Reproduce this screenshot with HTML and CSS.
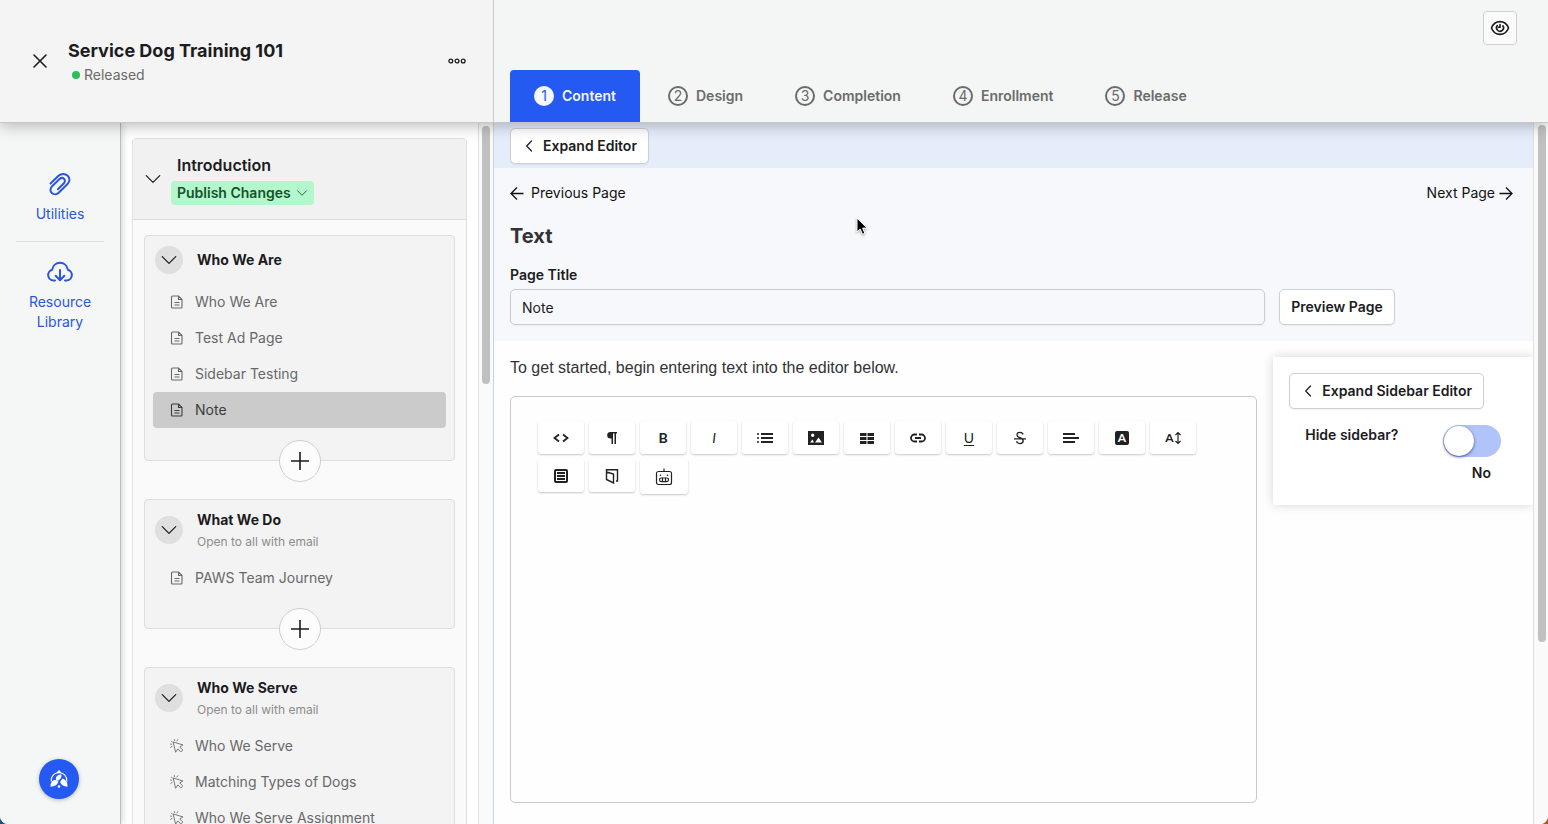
FILE: index.html
```html
<!DOCTYPE html>
<html lang="en">
<head>
<meta charset="utf-8">
<meta name="viewport" content="width=device-width, initial-scale=1">
<title>Service Dog Training 101</title>
<link rel="stylesheet" href="styles.css">
</head>
<body>
<svg class="sprite" aria-hidden="true">
  <symbol id="i-down" viewBox="0 0 16 16"><path d="M2 5l6 6 6-6" fill="none" stroke="currentColor" stroke-width="1.100" stroke-linecap="round" stroke-linejoin="round"/></symbol>
  <symbol id="i-left" viewBox="0 0 12 12"><path d="M9 1L4.200 6 9 11" fill="none" stroke="currentColor" stroke-width="1.200" stroke-linecap="round" stroke-linejoin="round"/></symbol>
  <symbol id="i-doc" viewBox="0 0 14 16"><path d="M2.500 2h6l3.500 3.500v7.500a1 1 0 0 1-1 1h-8.500a1 1 0 0 1-1-1v-10a1 1 0 0 1 1-1zM8.500 2v3.500h3.500M4.500 8.500h5M4.500 11h5" fill="none" stroke="currentColor" stroke-width="1.100"/></symbol>
  <symbol id="i-click" viewBox="0 0 16 16"><path d="M4 3.500l10.800 3.300-3.600 2.300 3.400 3.500-2.200 2.200-3.400-3.500-2.300 3.500zM2.600 3.400l-.9-.9M5.300 1.800L5 .6M8 2.200l.9-1.300M1.900 6L.6 5.800M2.300 8.600l-1.400.9" fill="none" stroke="currentColor" stroke-width="1" stroke-linejoin="round" stroke-linecap="round"/></symbol>
  <symbol id="i-plus" viewBox="0 0 18 18"><path d="M9 0v18M0 9h18" stroke="currentColor" stroke-width="1.600"/></symbol>
</svg>
<div class="app">
  <header class="top">
    <div class="course">
      <button class="bare close" aria-label="Close"><svg width="14" height="14" viewBox="0 0 14 14"><path d="M1 1l12 12M13 1L1 13" stroke="currentColor" stroke-width="1.600" stroke-linecap="round"/></svg></button>
      <div class="course-name">
        <h1>Service Dog Training 101</h1>
        <p class="status"><span class="dot"></span>Released</p>
      </div>
      <button class="bare more" aria-label="More"><svg width="20" height="8" viewBox="0 0 20 8"><g fill="none" stroke="currentColor" stroke-width="1.300"><circle cx="3.800" cy="4" r="1.900"/><circle cx="10" cy="4" r="1.900"/><circle cx="16.200" cy="4" r="1.900"/></g></svg></button>
    </div>
    <div class="top-main">
      <button class="eye" aria-label="Preview"><svg width="20" height="20" viewBox="0 0 20 20"><g fill="none" stroke="currentColor" stroke-width="1.600" stroke-linecap="round"><path d="M1.500 10C3 6 6 3.600 10 3.600S17 6 18.500 10C17 14 14 16.400 10 16.400S3 14 1.500 10z"/><path d="M12.900 7.800a3.500 3.500 0 1 1-5.600-.2M10 6.600v2.600h-1.600"/></g></svg></button>
      <nav class="tabs">
        <a href="#content" class="tab active"><span class="num">1</span>Content</a>
        <a href="#design" class="tab"><span class="num">2</span>Design</a>
        <a href="#completion" class="tab"><span class="num">3</span>Completion</a>
        <a href="#enrollment" class="tab"><span class="num">4</span>Enrollment</a>
        <a href="#release" class="tab"><span class="num">5</span>Release</a>
      </nav>
    </div>
  </header>
  <div class="body">
    <aside class="rail">
      <a href="#utilities" class="rail-link"><svg width="24" height="24" viewBox="0 0 24 24"><path d="M2.500 11.500L10.500 3.800C13.300 1.200 17.300 1.500 19.700 3.700S22 9.500 19.500 12l-8.800 8.800c-2 2-5 2-6.900.3s-1.700-4.900.3-6.800l7.400-7.300c1.300-1.200 3.300-1.300 4.500-.2s1.200 3.100-.1 4.400l-6 6" fill="none" stroke="currentColor" stroke-width="2" stroke-linecap="round"/></svg>Utilities</a>
      <a href="#library" class="rail-link"><svg width="28" height="24" viewBox="0 0 28 24"><path d="M9 20.500H7.500a5.500 5.500 0 0 1-1.300-10.800C6.800 5.500 10 2.800 14 2.800s7.200 2.700 7.800 6.900a5.500 5.500 0 0 1-1.300 10.800H19M14 10v10M9.700 15.800L14 20.200l4.300-4.400" fill="none" stroke="currentColor" stroke-width="2" stroke-linecap="round" stroke-linejoin="round"/></svg>Resource Library</a>
      <button class="fab" aria-label="Help"><svg width="20" height="20" viewBox="0 0 20 20"><path d="M2.200 12.500C2 6.500 5.500 3.700 10 3.700s8 2.800 7.800 8.800" fill="none" stroke="#fff" stroke-width="1.100"/><path d="M7.500 3.900L10 .8l2.500 3.100z" fill="#fff"/><path d="M12.500 5.500C9.500 5.500 7 7 6.800 9.300c0 1.100.2 2 .7 2.700 3.500-.8 5.300-3 5-6.500z" fill="#fff"/><path d="M1.500 17.800c-.3-3.300 1.200-6 4-7 1.200 1 3 .8 3.800 1.800-.5 3-3.300 5-7.800 5.200zM18.500 17.800c.3-3.800-1.500-7.300-5-8.300-.8 1.500-2 2.200-2.300 3.600.8 2.800 3.300 4.600 7.300 4.700z" fill="#fff"/><circle cx="10" cy="17.500" r="1.300" fill="#fff"/></svg></button>
    </aside>
    <aside class="outline">
      <section class="module">
        <div class="module-head">
          <button class="bare" aria-label="Collapse Introduction"><svg width="18" height="18"><use href="#i-down"/></svg></button>
          <div class="module-title">
            <h2>Introduction</h2>
            <button class="publish">Publish Changes<svg width="12" height="12"><use href="#i-down"/></svg></button>
          </div>
        </div>
        <div class="lessons">
          <section class="lesson">
            <div class="lesson-head one-line">
              <button class="round" aria-label="Collapse"><svg width="18" height="18"><use href="#i-down"/></svg></button>
              <div><h3>Who We Are</h3></div>
            </div>
            <a href="#p1" class="item"><svg width="14" height="16"><use href="#i-doc"/></svg>Who We Are</a>
            <a href="#p2" class="item"><svg width="14" height="16"><use href="#i-doc"/></svg>Test Ad Page</a>
            <a href="#p3" class="item"><svg width="14" height="16"><use href="#i-doc"/></svg>Sidebar Testing</a>
            <a href="#p4" class="item current"><svg width="14" height="16"><use href="#i-doc"/></svg>Note</a>
            <button class="add" aria-label="Add page"><svg width="18" height="18"><use href="#i-plus"/></svg></button>
          </section>
          <section class="lesson">
            <div class="lesson-head two-line">
              <button class="round" aria-label="Collapse"><svg width="18" height="18"><use href="#i-down"/></svg></button>
              <div><h3>What We Do</h3><p>Open to all with email</p></div>
            </div>
            <a href="#p5" class="item"><svg width="14" height="16"><use href="#i-doc"/></svg>PAWS Team Journey</a>
            <button class="add" aria-label="Add page"><svg width="18" height="18"><use href="#i-plus"/></svg></button>
          </section>
          <section class="lesson">
            <div class="lesson-head two-line">
              <button class="round" aria-label="Collapse"><svg width="18" height="18"><use href="#i-down"/></svg></button>
              <div><h3>Who We Serve</h3><p>Open to all with email</p></div>
            </div>
            <a href="#p6" class="item"><svg width="14" height="16"><use href="#i-click"/></svg>Who We Serve</a>
            <a href="#p7" class="item"><svg width="14" height="16"><use href="#i-click"/></svg>Matching Types of Dogs</a>
            <a href="#p8" class="item"><svg width="14" height="16"><use href="#i-click"/></svg>Who We Serve Assignment</a>
          </section>
        </div>
      </section>
    </aside>
    <div class="track outline-track"><div class="thumb"></div></div>
    <main class="main">
      <div class="bar"><button class="btn"><svg width="13" height="12"><use href="#i-left"/></svg>Expand Editor</button></div>
      <div class="page-head">
        <div class="pager">
          <a href="#prev"><svg width="14" height="14" viewBox="0 0 14 14"><path d="M13.500 7.500h-12M7 1.500l-6 6 6 6" fill="none" stroke="currentColor" stroke-width="1.300"/></svg>Previous Page</a>
          <a href="#next" class="next">Next Page<svg width="14" height="14" viewBox="0 0 14 14"><path d="M.5 7.500h12M7 1.500l6 6-6 6" fill="none" stroke="currentColor" stroke-width="1.300"/></svg></a>
        </div>
        <h2>Text</h2>
        <label for="page-title">Page Title</label>
        <div class="title-row">
          <input id="page-title" type="text" value="Note">
          <button class="btn">Preview Page</button>
        </div>
      </div>
      <div class="work">
        <div class="editor-col">
          <p class="intro">To get started, begin entering text into the editor below.</p>
          <div class="editor">
            <div class="tools">
              <button aria-label="HTML"><svg width="16" height="16" viewBox="0 0 16 16"><path d="M6 4.500L1.500 8 6 11.500M10 4.500L14.500 8 10 11.500" fill="none" stroke="currentColor" stroke-width="1.800"/></svg></button>
              <button aria-label="Format"><svg width="16" height="16" viewBox="0 0 16 16"><path d="M13 2H6.500a3.300 3.300 0 0 0 0 6.600H7.500V14H9V3.500h1.500V14H12V3.500h1z" fill="currentColor"/></svg></button>
              <button class="letter bold">B</button>
              <button class="letter italic">I</button>
              <button aria-label="Lists"><svg width="16" height="16" viewBox="0 0 16 16"><path d="M4 4h12M4 8h12M4 12h12" stroke="currentColor" stroke-width="2"/><path d="M0 4h2M0 8h2M0 12h2" stroke="currentColor" stroke-width="1.600"/></svg></button>
              <button aria-label="Image"><svg width="16" height="16" viewBox="0 0 16 16"><path fill-rule="evenodd" d="M0 1h16v14H0zM2 12.500h4L4.500 9.500zM7 12.500h7L10.500 7.500zM4.700 3.500a1.700 1.700 0 1 0 0 3.400 1.700 1.700 0 0 0 0-3.400z" fill="currentColor"/></svg></button>
              <button aria-label="Table"><svg width="16" height="16" viewBox="0 0 16 16"><path d="M1 3h6.500v3H1zM8.500 3H15v3H8.500zM1 7h6.500v3H1zM8.500 7H15v3H8.500zM1 11h6.500v3H1zM8.500 11H15v3H8.500z" fill="currentColor"/></svg></button>
              <button aria-label="Link"><svg width="16" height="16" viewBox="0 0 16 16"><path d="M7 4.500H4.500a3.500 3.500 0 0 0 0 7H7M9 4.500h2.500a3.500 3.500 0 0 1 0 7H9M5 8h6" fill="none" stroke="currentColor" stroke-width="1.800"/></svg></button>
              <button class="letter under">U</button>
              <button class="letter strike" aria-label="Strikethrough"><svg width="12" height="14" viewBox="0 0 12 14"><path d="M9.200 3.400C8.500 2 7.400 1.400 6 1.400 4.200 1.400 3 2.400 3 3.900 3 7.300 9.200 6 9.200 9.800c0 1.700-1.300 2.800-3.200 2.800-1.700 0-2.900-.8-3.500-2.300M0 7.800h12" fill="none" stroke="currentColor" stroke-width="1.300"/></svg></button>
              <button aria-label="Align"><svg width="16" height="16" viewBox="0 0 16 16"><path d="M0 4h12M0 8h16M0 12h12" stroke="currentColor" stroke-width="2"/></svg></button>
              <button class="letter" aria-label="Text color"><span class="ink">A</span></button>
              <button class="letter size" aria-label="Font size">A<svg width="6" height="14" viewBox="0 0 6 14"><path d="M3 1.500v11M.5 4L3 1.500 5.500 4M.5 10L3 12.500 5.500 10" fill="none" stroke="currentColor" stroke-width="1.200"/></svg></button>
              <button aria-label="Readable"><svg width="16" height="16" viewBox="0 0 16 16"><rect x="2" y="2" width="12" height="12" rx="1" fill="none" stroke="currentColor" stroke-width="2"/><path d="M4 5h8M4 8h8M4 11h8" stroke="currentColor" stroke-width="2"/></svg></button>
              <button aria-label="Reusable content"><svg width="16" height="16" viewBox="0 0 16 16"><path d="M2.500 4l7 2v9l-7-3.500zM2.500 4V1.700h11V13h-1.500" fill="none" stroke="currentColor" stroke-width="1.400"/></svg></button>
              <button class="robot" aria-label="Assistant"><svg width="18" height="18" viewBox="0 0 18 18"><g fill="none" stroke="currentColor" stroke-width="1.200"><rect x="1.500" y="3.500" width="15" height="13" rx="2"/><path d="M9 3.500V.5"/><rect x="4.500" y="10" width="9" height="3.600" rx="1.800"/><path d="M7.500 10v3.600M10.500 10v3.600"/></g><circle cx="5.500" cy="7.200" r=".8" fill="currentColor"/><circle cx="12.500" cy="7.200" r=".8" fill="currentColor"/></svg></button>
            </div>
          </div>
        </div>
        <aside class="side">
          <button class="btn"><svg width="13" height="12"><use href="#i-left"/></svg>Expand Sidebar Editor</button>
          <div class="hide-row">
            <label for="hide">Hide sidebar?</label>
            <div class="switch"><input id="hide" type="checkbox" role="switch"><span>No</span></div>
          </div>
        </aside>
      </div>
    </main>
    <div class="track main-track"><div class="thumb"></div></div>
  </div>
  <svg class="cursor" width="14" height="20" viewBox="0 0 14 20" aria-hidden="true"><path d="M1 1v14l3.200-3 2.300 5.300 2.400-1-2.300-5.200H11z" fill="#000" stroke="#fff" stroke-width="1"/></svg>
</div>
</body>
</html>
```
FILE: styles.css
```css
* { box-sizing: border-box; }
body { margin: 0; font-family: Inter, "Liberation Sans", sans-serif; font-size: 14px; line-height: 20px; color: #1c1c1e; background: linear-gradient(90deg, #1f4f78, #a85a28); }
h1, h2, h3, p { margin: 0; }
a { color: inherit; text-decoration: none; }
button, input { font: inherit; color: inherit; }
svg { display: block; flex: none; }
.sprite { position: absolute; width: 0; height: 0; }
.bare { border: 0; background: none; padding: 0; display: flex; }
.app { position: relative; height: 100vh; display: flex; flex-direction: column; overflow: hidden; border-radius: 0 0 8px 8px; background: #fefefe; }

.top { position: relative; z-index: 2; display: flex; height: 123px; flex: none; background: #f4f4f4; border-bottom: 1px solid #c6c8ca; box-shadow: 0 3px 14px rgba(0, 0, 0, .26); }
.course { width: 494px; flex: none; display: flex; align-items: center; padding: 4px 26px 4px 33px; border-right: 1px solid #c9cbcc; }
.course-name { flex: 1; padding: 2px 0 0 21px; }
h1 { font-size: 18px; line-height: 26px; font-weight: 700; }
.status { display: flex; align-items: center; gap: 4px; padding-left: 4px; line-height: 22px; color: #6b6b6b; }
.dot { width: 8px; height: 8px; border-radius: 50%; background: #2bbd5e; }
.top-main { flex: 1; display: flex; flex-direction: column; justify-content: space-between; padding: 11px 31px 0 16px; background: #f4f5f5; }
.eye { align-self: flex-end; width: 34px; height: 34px; padding: 6px; border: 1px solid #cdcfd1; border-radius: 4px; background: #fafafa; }
.tabs { display: flex; gap: 4px; }
.tab { display: flex; align-items: center; gap: 8px; height: 52px; padding: 0 24px; font-weight: 600; color: #6b6b6b; border-radius: 4px 4px 0 0; }
.num { width: 20px; height: 20px; border: 2px solid #6b6b6b; border-radius: 50%; font-weight: 400; line-height: 16px; text-align: center; }
.tab.active { background: #2459f2; color: #f4f7ff; }
.active .num { border-color: #f4f7ff; background: #f4f7ff; color: #2459f2; }

.body { flex: 1; min-height: 0; display: flex; }
.rail { width: 121px; flex: none; position: relative; z-index: 1; display: flex; flex-direction: column; align-items: center; padding: 49px 16px 25px; background: #f5f6f6; border-right: 1px solid #b6bfc0; box-shadow: 2px 0 6px rgba(60, 80, 90, .2); }
.rail-link { display: flex; flex-direction: column; align-items: center; gap: 8px; width: 88px; padding-bottom: 17px; text-align: center; color: #2c56d8; }
.rail-link + .rail-link { padding-top: 18px; border-top: 1px solid #dfe1e1; }
.fab { margin-top: auto; align-self: flex-start; margin-left: 23px; width: 40px; height: 40px; padding: 10px; border: 0; border-radius: 50%; background: #2459f2; box-shadow: 0 1px 4px rgba(0, 0, 0, .25); }

.outline { width: 357px; flex: none; overflow: hidden; padding: 15px 11px 0; }
.module { border: 1px solid #dfe1e1; border-radius: 4px; background: #fafafb; }
.module-head { display: flex; align-items: center; gap: 7px; height: 81px; padding-left: 11px; background: #f1f1f2; border-bottom: 1px solid #dddfdf; }
.module-title { display: flex; flex-direction: column; align-items: flex-start; gap: 4px; }
.module-title h2 { padding-left: 8px; font-size: 16px; line-height: 24px; font-weight: 600; }
.publish { display: flex; align-items: center; gap: 5px; height: 24px; margin-left: 2px; padding: 0 6px; border: 0; border-radius: 4px; background: #b4f7cc; color: #14532d; font-weight: 600; }
.lessons { display: flex; flex-direction: column; gap: 38px; padding: 15px 11px; }
.lesson { position: relative; padding: 0 8px 32px; border: 1px solid #dcdfde; border-radius: 4px; background: #f3f3f4; }
.lesson-head { display: flex; align-items: center; gap: 14px; height: 60px; padding-left: 2px; }
.one-line { height: 48px; }
.two-line > div { padding-top: 4px; }
.round { width: 28px; height: 28px; padding: 5px; border: 0; border-radius: 50%; background: #dfdfdf; }
h3 { font-size: 14px; line-height: 20px; font-weight: 700; }
.lesson-head p { font-size: 12px; line-height: 24px; color: #8c8c8c; }
.item { display: flex; align-items: center; gap: 11px; height: 36px; padding-left: 17px; border-radius: 4px; color: #686868; }
.current { background: #cbcbcb; color: #3c3c3c; }
.add { position: absolute; left: 50%; bottom: -1px; transform: translate(-50%, 50%); width: 42px; height: 42px; padding: 11px; border: 1px solid #cfcfcf; border-radius: 50%; background: #fcfcfc; }

.track { width: 15px; flex: none; padding: 3px 3px 0; background: #fafafa; border-left: 1px solid #dfe1e1; }
.thumb { width: 8px; border-radius: 4px; background: #c0c0c0; }
.outline-track .thumb { height: 37%; }
.main-track { padding-left: 4px; padding-top: 2px; }
.main-track .thumb { height: 74%; }

.main { flex: 1; min-width: 0; display: flex; flex-direction: column; border-left: 1px solid #c9d3dc; background: #fefefe; }
.bar { padding: 5px 16px 4px; background: #e5edfb; }
.btn { display: inline-flex; align-items: center; gap: 8px; height: 36px; padding: 0 11px; border: 1px solid #cdcfd6; border-radius: 5px; background: #fff; font-weight: 600; white-space: nowrap; box-shadow: 0 1px 2px rgba(0, 0, 0, .06); }
.page-head { padding: 15px 16px 16px; background: #f7f8fb; }
.pager { display: flex; justify-content: space-between; padding-right: 4px; color: #111; }
.pager a { display: flex; align-items: center; gap: 7px; }
.pager .next { gap: 4px; }
.page-head h2 { margin-top: 20px; font-size: 20px; line-height: 26px; font-weight: 700; color: #303236; }
.page-head label { display: block; margin-top: 16px; font-weight: 600; }
.title-row { display: flex; gap: 14px; margin-top: 4px; }
.title-row input { width: 75%; height: 36px; padding: 0 11px; border: 1px solid #c8cbd2; border-radius: 5px; background: transparent; box-shadow: 0 1px 2px rgba(0, 0, 0, .05); }

.work { flex: 1; display: grid; grid-template-columns: 3fr 1fr; align-items: start; }
.editor-col { height: 100%; display: flex; flex-direction: column; padding: 16px 16px 21px; }
.intro { margin-bottom: 17px; font: 16px/22px "Liberation Sans", Arial, sans-serif; color: #333; }
.editor { flex: 1; padding: 24px 27px; border: 1px solid #c8cad2; border-radius: 5px; }
.tools { display: flex; flex-wrap: wrap; align-items: flex-start; gap: 5px; }
.tools button { width: 46px; height: 33px; display: flex; align-items: center; justify-content: center; padding: 0; border: 0; border-radius: 3px; background: #fff; color: #222; box-shadow: 0 1px 2px rgba(0, 0, 0, .22); }
.tools .robot { width: 48px; height: 35px; }
.letter { font-family: Lato, sans-serif; font-size: 14px; }
.bold { font-weight: 700; }
.italic { font-style: italic; }
.under { text-decoration: underline; text-underline-offset: 2px; text-decoration-thickness: 1px; }
.ink { width: 14px; height: 14px; border-radius: 2px; background: #222; color: #fff; font-size: 12px; line-height: 14px; font-weight: 700; }
.tools .size { gap: 1px; font-size: 12px; font-weight: 700; }

.side { min-height: 148px; margin-top: 16px; padding: 16px; background: #fff; box-shadow: 0 0 10px rgba(0, 0, 0, .16); clip-path: inset(-12px 0 -12px -12px); }
.hide-row { display: flex; justify-content: space-between; margin-top: 16px; padding: 0 16px; font-weight: 600; }
.switch { display: flex; flex-direction: column; align-items: flex-end; gap: 6px; }
.switch span { padding-right: 10px; }
.switch input { appearance: none; width: 58px; height: 32px; margin: 0; border-radius: 16px; background: #b0c4fa; }
.switch input::before { content: ""; display: block; width: 30px; height: 30px; margin: 1px; border-radius: 50%; background: #fff; box-shadow: 0 1px 3px rgba(20, 30, 70, .7); }
.switch input:checked { background: #2459f2; }
.switch input:checked::before { margin-left: 27px; }
.cursor { position: absolute; z-index: 3; left: 856px; top: 217px; filter: drop-shadow(0 1px 1px rgba(0, 0, 0, .35)); }
```
